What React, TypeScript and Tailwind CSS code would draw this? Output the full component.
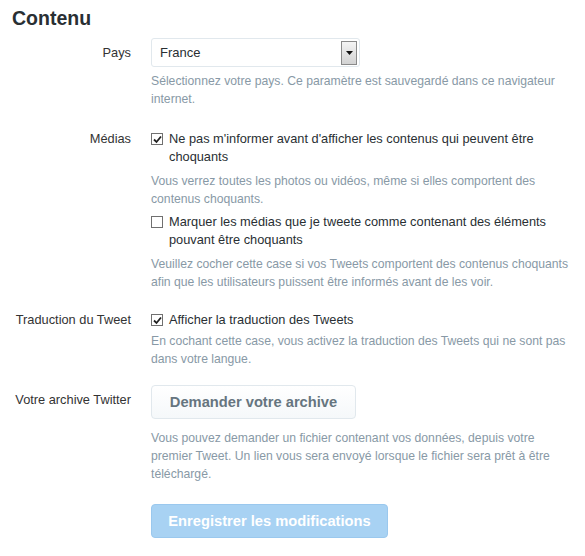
const font = { fontFamily: '"Liberation Sans", Arial, sans-serif' };

function Row({ label, children, top = 'pt-0' }: { label: string; children: React.ReactNode; top?: string }) {
  return (
    <div className="flex">
      <div className={`w-[119px] shrink-0 text-right text-[12.8px] leading-[18px] text-[#333] ${top}`}>{label}</div>
      <div className="ml-5 w-[425px]">{children}</div>
    </div>
  );
}

function Help({ children }: { children: React.ReactNode }) {
  return <p className="text-[12.2px] leading-[18px] text-[#8899a6]">{children}</p>;
}

function Check({ checked, children }: { checked?: boolean; children: React.ReactNode }) {
  return (
    <label className="flex items-start gap-[6px] text-[12.8px] leading-[18px] text-[#292f33]">
      <span className="mt-[3px] flex h-[12px] w-[12px] shrink-0 items-center justify-center border border-[#707070] bg-white">
        {checked && (
          <svg width="9" height="9" viewBox="0 0 9 9">
            <path d="M1 4.5 L3.5 7 L8 1.5" fill="none" stroke="#222" strokeWidth="1.8" />
          </svg>
        )}
      </span>
      <span>{children}</span>
    </label>
  );
}

export default function App() {
  return (
    <div className="h-[556px] w-[585px] bg-white px-3 pt-[6px]" style={font}>
      <h2 className="text-[19.5px] font-bold leading-[24px] text-[#292f33]">Contenu</h2>

      <div className="mt-[8px] flex flex-col">
        <Row label="Pays" top="pt-[6px]">
          <div className="flex h-[29px] w-[209px] items-center justify-between rounded-[3px] border border-[#e1e8ed] bg-white pl-[8px] pr-[2px] text-[13px] text-[#292f33]">
            <span>France</span>
            <span className="flex h-[24px] w-[16px] items-center justify-center border border-[#8a8a8a] bg-gradient-to-b from-[#f4f4f4] to-[#d2d2d2]">
              <svg width="7" height="4" viewBox="0 0 7 4">
                <path d="M0 0 H7 L3.5 4 Z" fill="#111" />
              </svg>
            </span>
          </div>
          <div className="mt-[5px]">
            <Help>Sélectionnez votre pays. Ce paramètre est sauvegardé dans ce navigateur internet.</Help>
          </div>
        </Row>

        <div className="mt-[22px]">
          <Row label="Médias">
            <Check checked>Ne pas m'informer avant d'afficher les contenus qui peuvent être choquants</Check>
            <div className="mt-[6px]">
              <Help>Vous verrez toutes les photos ou vidéos, même si elles comportent des contenus choquants.</Help>
            </div>
            <div className="mt-[5px]">
              <Check>Marquer les médias que je tweete comme contenant des éléments pouvant être choquants</Check>
            </div>
            <div className="mt-[6px]">
              <Help>Veuillez cocher cette case si vos Tweets comportent des contenus choquants afin que les utilisateurs puissent être informés avant de les voir.</Help>
            </div>
          </Row>
        </div>

        <div className="mt-[20px]">
          <Row label="Traduction du Tweet">
            <Check checked>Afficher la traduction des Tweets</Check>
            <div className="mt-[3px]">
              <Help>En cochant cette case, vous activez la traduction des Tweets qui ne sont pas dans votre langue.</Help>
            </div>
          </Row>
        </div>

        <div className="mt-[17px]">
          <Row label="Votre archive Twitter" top="pt-[6px]">
            <button className="h-[34px] w-[205px] rounded-[4px] border border-[#e1e8ed] bg-gradient-to-b from-white to-[#f5f8fa] text-[14.7px] font-bold text-[#66757f]">
              Demander votre archive
            </button>
            <div className="mt-[10px]">
              <Help>Vous pouvez demander un fichier contenant vos données, depuis votre premier Tweet. Un lien vous sera envoyé lorsque le fichier sera prêt à être téléchargé.</Help>
            </div>
            <button className="mt-[21px] h-[34px] w-[237px] rounded-[4px] border border-[#9ac8ee] bg-[#a8d2f3] text-[14.7px] font-bold text-white">
              Enregistrer les modifications
            </button>
          </Row>
        </div>
      </div>
    </div>
  );
}
